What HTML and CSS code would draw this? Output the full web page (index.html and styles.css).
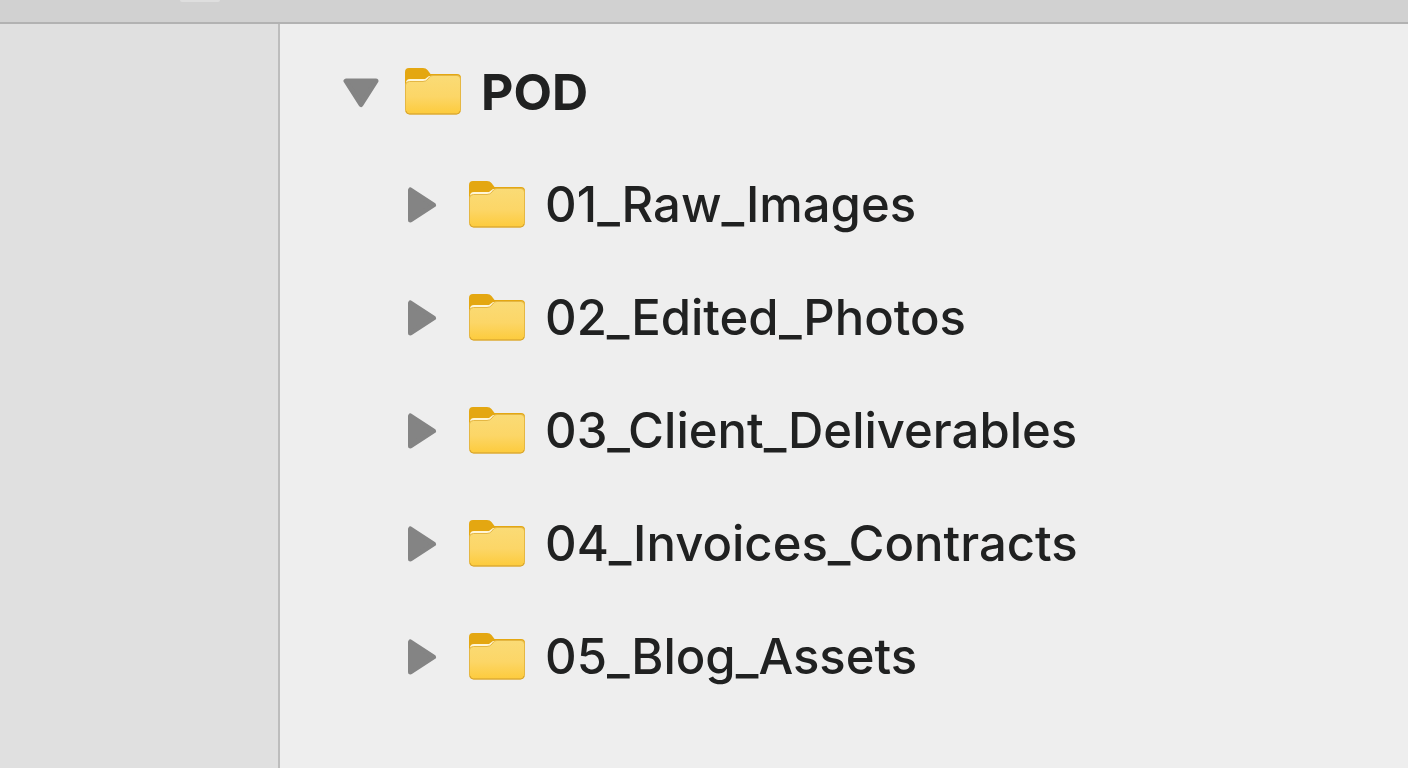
FILE: index.html
```html
<!DOCTYPE html>
<html lang="en">
<head>
  <meta charset="UTF-8">
  <title>POD</title>
  <meta name="viewport" content="width=device-width, initial-scale=1">
  <link rel="stylesheet" href="styles.css">
</head>
<body>
<!-- shared icons -->
<svg class="sprite" aria-hidden="true">
  <defs>
    <linearGradient id="front" x1="0" y1="0" x2="0" y2="1">
      <stop offset="0" stop-color="#fadb76"/>
      <stop offset="0.55" stop-color="#fcd667"/>
      <stop offset="1" stop-color="#fdcb3c"/>
    </linearGradient>
    <symbol id="folder" viewBox="0 0 56 48">
      <path d="M0 18V4Q0 0 4 0H18Q21 0 22.500 2L25.500 6H52Q56 6 56 10V20H0Z" fill="#e4a711"/>
      <path d="M1 18V15Q1 11 5 11H20L24 8H30V20H1Z" fill="#fff6d8"/>
      <path d="M.5 17Q.5 13.500 4.500 13.500H18Q21 13.500 23 11L24.500 9Q25.500 7.500 28 7.500H52Q55.500 7.500 55.500 11V42Q55.500 46 51.500 46H4.500Q.5 46 .5 42Z" fill="url(#front)" stroke="#e5b743"/>
      <path d="M1 43Q1.500 46 4.500 46H51.500Q54.500 46 55 43" fill="none" stroke="#d9a52c"/>
    </symbol>
    <symbol id="right" viewBox="0 0 36 38">
      <path d="M3.500 4V34L26.500 19Z" fill="#848484" stroke="#848484" stroke-width="5" stroke-linejoin="round"/>
    </symbol>
    <symbol id="down" viewBox="0 0 36 38">
      <path d="M3 8H33L18 31.500Z" fill="#848484" stroke="#848484" stroke-width="5" stroke-linejoin="round"/>
    </symbol>
  </defs>
</svg>

<div class="window">
  <header class="toolbar"><span class="tab"></span></header>
  <div class="content">
    <aside class="sidebar"></aside>
    <main class="files">
      <div class="row root">
        <button class="toggle" aria-label="Collapse POD" aria-expanded="true" aria-controls="children"><svg><use href="#down"/></svg></button>
        <svg class="folder"><use href="#folder"/></svg>
        <span class="name">POD</span>
      </div>
      <ul class="children" id="children">
        <li class="row">
          <button class="toggle" aria-label="Expand 01_Raw_Images" aria-expanded="false"><svg><use href="#right"/></svg></button>
          <svg class="folder"><use href="#folder"/></svg>
          <span class="name">01_Raw_Images</span>
        </li>
        <li class="row">
          <button class="toggle" aria-label="Expand 02_Edited_Photos" aria-expanded="false"><svg><use href="#right"/></svg></button>
          <svg class="folder"><use href="#folder"/></svg>
          <span class="name">02_Edited_Photos</span>
        </li>
        <li class="row">
          <button class="toggle" aria-label="Expand 03_Client_Deliverables" aria-expanded="false"><svg><use href="#right"/></svg></button>
          <svg class="folder"><use href="#folder"/></svg>
          <span class="name">03_Client_Deliverables</span>
        </li>
        <li class="row">
          <button class="toggle" aria-label="Expand 04_Invoices_Contracts" aria-expanded="false"><svg><use href="#right"/></svg></button>
          <svg class="folder"><use href="#folder"/></svg>
          <span class="name">04_Invoices_Contracts</span>
        </li>
        <li class="row">
          <button class="toggle" aria-label="Expand 05_Blog_Assets" aria-expanded="false"><svg><use href="#right"/></svg></button>
          <svg class="folder"><use href="#folder"/></svg>
          <span class="name">05_Blog_Assets</span>
        </li>
      </ul>
    </main>
  </div>
</div>
</body>
</html>
```
FILE: styles.css
```css
:root {
  --bg: #eeeeee;
  --side: #e0e0e0;
  --bar: #d1d1d1;
  --text: #202121;
}
* { box-sizing: border-box; }
body {
  margin: 0;
  background: var(--bg);
  color: var(--text);
  font-family: Inter, "Liberation Sans", sans-serif;
}
.sprite {
  position: absolute;
  width: 0;
  height: 0;
}
.window {
  display: flex;
  flex-direction: column;
  min-height: 100vh;
}
.toolbar {
  height: 24px;
  padding-left: 180px;
  background: var(--bar);
  border-bottom: 2px solid #b2b2b2;
}
.tab {
  display: block;
  width: 40px;
  height: 2px;
  background: #dedede;
  border-radius: 0 0 4px 4px;
}
.content {
  display: flex;
  flex: 1;
}
.sidebar {
  width: 280px;
  flex-shrink: 0;
  background: var(--side);
  border-right: 2px solid #bdbdbd;
}
.files {
  flex: 1;
  padding: 11px 24px 12px 63px;
}
.children {
  list-style: none;
  margin: 0;
  padding: 0 0 0 64px;
}
.row {
  display: flex;
  align-items: center;
  height: 113px;
}
.toggle {
  width: 36px;
  height: 38px;
  margin-right: 26px;
  padding: 0;
  background: none;
  border: none;
  cursor: pointer;
}
.toggle svg {
  display: block;
  width: 36px;
  height: 38px;
}
.folder {
  width: 56px;
  height: 48px;
  margin-right: 20px;
}
.name {
  font-size: 49px;
  font-weight: 500;
  line-height: 60px;
}
.root .name {
  font-size: 50px;
  font-weight: 700;
}
```
